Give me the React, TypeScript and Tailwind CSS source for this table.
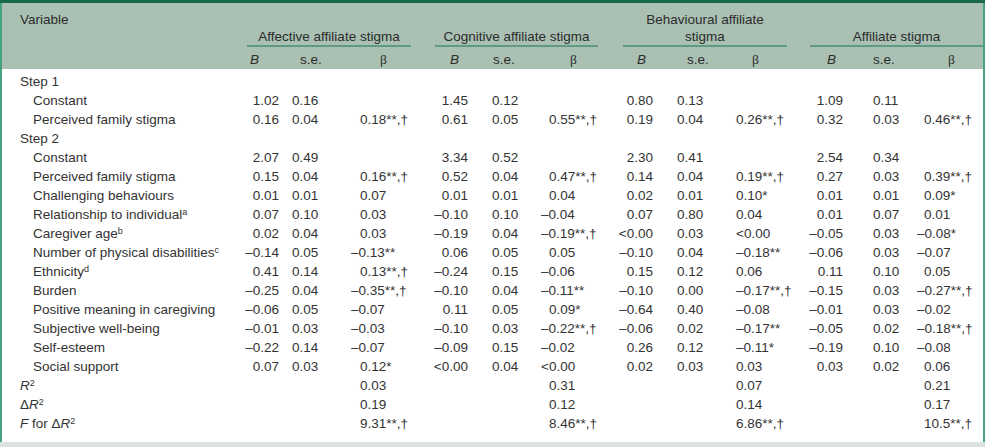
type Cell = [string, string, string];
type Row = { label: React.ReactNode; indent?: boolean; cells?: Cell[] };

const sup = (s: string) => <sup className="text-[9px]">{s}</sup>;
const R2 = (
  <>
    <i>R</i>
    <sup className="text-[9px]">2</sup>
  </>
);

const rows: Row[] = [
  { label: "Step 1" },
  { label: "Constant", indent: true, cells: [["1.02", "0.16", ""], ["1.45", "0.12", ""], ["0.80", "0.13", ""], ["1.09", "0.11", ""]] },
  { label: "Perceived family stigma", indent: true, cells: [["0.16", "0.04", "0.18**,†"], ["0.61", "0.05", "0.55**,†"], ["0.19", "0.04", "0.26**,†"], ["0.32", "0.03", "0.46**,†"]] },
  { label: "Step 2" },
  { label: "Constant", indent: true, cells: [["2.07", "0.49", ""], ["3.34", "0.52", ""], ["2.30", "0.41", ""], ["2.54", "0.34", ""]] },
  { label: "Perceived family stigma", indent: true, cells: [["0.15", "0.04", "0.16**,†"], ["0.52", "0.04", "0.47**,†"], ["0.14", "0.04", "0.19**,†"], ["0.27", "0.03", "0.39**,†"]] },
  { label: "Challenging behaviours", indent: true, cells: [["0.01", "0.01", "0.07"], ["0.01", "0.01", "0.04"], ["0.02", "0.01", "0.10*"], ["0.01", "0.01", "0.09*"]] },
  { label: <>Relationship to individual{sup("a")}</>, indent: true, cells: [["0.07", "0.10", "0.03"], ["–0.10", "0.10", "–0.04"], ["0.07", "0.80", "0.04"], ["0.01", "0.07", "0.01"]] },
  { label: <>Caregiver age{sup("b")}</>, indent: true, cells: [["0.02", "0.04", "0.03"], ["–0.19", "0.04", "–0.19**,†"], ["<0.00", "0.03", "<0.00"], ["–0.05", "0.03", "–0.08*"]] },
  { label: <>Number of physical disabilities{sup("c")}</>, indent: true, cells: [["–0.14", "0.05", "–0.13**"], ["0.06", "0.05", "0.05"], ["–0.10", "0.04", "–0.18**"], ["–0.06", "0.03", "–0.07"]] },
  { label: <>Ethnicity{sup("d")}</>, indent: true, cells: [["0.41", "0.14", "0.13**,†"], ["–0.24", "0.15", "–0.06"], ["0.15", "0.12", "0.06"], ["0.11", "0.10", "0.05"]] },
  { label: "Burden", indent: true, cells: [["–0.25", "0.04", "–0.35**,†"], ["–0.10", "0.04", "–0.11**"], ["–0.10", "0.00", "–0.17**,†"], ["–0.15", "0.03", "–0.27**,†"]] },
  { label: "Positive meaning in caregiving", indent: true, cells: [["–0.06", "0.05", "–0.07"], ["0.11", "0.05", "0.09*"], ["–0.64", "0.40", "–0.08"], ["–0.01", "0.03", "–0.02"]] },
  { label: "Subjective well-being", indent: true, cells: [["–0.01", "0.03", "–0.03"], ["–0.10", "0.03", "–0.22**,†"], ["–0.06", "0.02", "–0.17**"], ["–0.05", "0.02", "–0.18**,†"]] },
  { label: "Self-esteem", indent: true, cells: [["–0.22", "0.14", "–0.07"], ["–0.09", "0.15", "–0.02"], ["0.26", "0.12", "–0.11*"], ["–0.19", "0.10", "–0.08"]] },
  { label: "Social support", indent: true, cells: [["0.07", "0.03", "0.12*"], ["<0.00", "0.04", "<0.00"], ["0.02", "0.03", "0.03"], ["0.03", "0.02", "0.06"]] },
  { label: R2, cells: [["", "", "0.03"], ["", "", "0.31"], ["", "", "0.07"], ["", "", "0.21"]] },
  { label: <>Δ{R2}</>, cells: [["", "", "0.19"], ["", "", "0.12"], ["", "", "0.14"], ["", "", "0.17"]] },
  { label: <><i>F</i> for Δ{R2}</>, cells: [["", "", "9.31**,†"], ["", "", "8.46**,†"], ["", "", "6.86**,†"], ["", "", "10.5**,†"]] },
];

const sePad = ["pl-[13px]", "pl-[24px]", "pl-[24px]", "pl-[30px]"];
const betaPos = ["pl-[20px]", "pl-[19px]", "pl-[21px]", "pl-[19px]"];
const betaNeg = ["pl-[11px]", "pl-[11px]", "pl-[21px]", "pl-[12px]"];
const bHead = ["pl-[18px]", "pl-[30px]", "pl-[27px]", "pl-[27px]"];
const seHead = ["pl-[21px]", "pl-[25px]", "pl-[34px]", "pl-[30px]"];
const betaHead = ["pl-[40px]", "pl-[40px]", "pl-[37px]", "pl-[43px]"];

const groups = [
  { title: "Affective affiliate stigma", cls: "ml-[15px] mr-[9px]" },
  { title: "Cognitive affiliate stigma", cls: "ml-[15px] mr-[12px]" },
  { title: "Behavioural affiliate stigma", cls: "ml-[13px] mr-[13px] px-[8px]" },
  { title: "Affiliate stigma", cls: "ml-[10px]" },
];

const cols =
  "grid grid-cols-[230px_47px_61px_80px_48px_62px_80px_43px_62px_85px_43px_62px_78px]";

export default function App() {
  return (
    <div
      className="w-[985px] h-[447px] bg-white text-[13.5px] text-[#333] flex flex-col"
      style={{ fontFamily: '"Liberation Sans", Arial, sans-serif' }}
    >
      <div className="h-[3px] bg-[#17674a]" />
      <div className="flex-1 border-x-2 border-[#45a283] flex flex-col">
        <div className="bg-[#a9c0b3] text-[#2c2c2c] h-[66px] pt-[7px]">
          <div className={cols}>
            <div className="pl-[18px] leading-[17px] pt-[1px]">Variable</div>
            {groups.map((g, i) => (
              <div key={i} className="col-span-3 flex">
                <div
                  className={`flex-1 flex items-end justify-center text-center leading-[17px] h-[37px] border-b-2 border-[#5f9a84] ${g.cls}`}
                >
                  <span>{g.title}</span>
                </div>
              </div>
            ))}
          </div>
          <div className={`${cols} pt-[4px] leading-[18px]`}>
            <div />
            {[0, 1, 2, 3].map((i) => (
              <div key={i} className="contents">
                <div className={bHead[i]}>
                  <i>B</i>
                </div>
                <div className={seHead[i]}>s.e.</div>
                <div className={betaHead[i]} style={{ fontFamily: '"Liberation Serif", serif' }}>
                  β
                </div>
              </div>
            ))}
          </div>
        </div>
        <div className="pt-[3px]">
          {rows.map((r, ri) => (
            <div key={ri} className={`${cols} h-[19px] leading-[19px] whitespace-nowrap`}>
              <div className={r.indent ? "pl-[31px]" : "pl-[18px]"}>{r.label}</div>
              {(r.cells ?? [["", "", ""], ["", "", ""], ["", "", ""], ["", "", ""]]).map((c, i) => {
                const neg = c[2].startsWith("–") || c[2].startsWith("<");
                return (
                  <div key={i} className="contents">
                    <div className="text-right">{c[0]}</div>
                    <div className={sePad[i]}>{c[1]}</div>
                    <div className={neg ? betaNeg[i] : betaPos[i]}>{c[2]}</div>
                  </div>
                );
              })}
            </div>
          ))}
        </div>
      </div>
      <div className="h-[5px] bg-[#dde3df]" />
    </div>
  );
}
